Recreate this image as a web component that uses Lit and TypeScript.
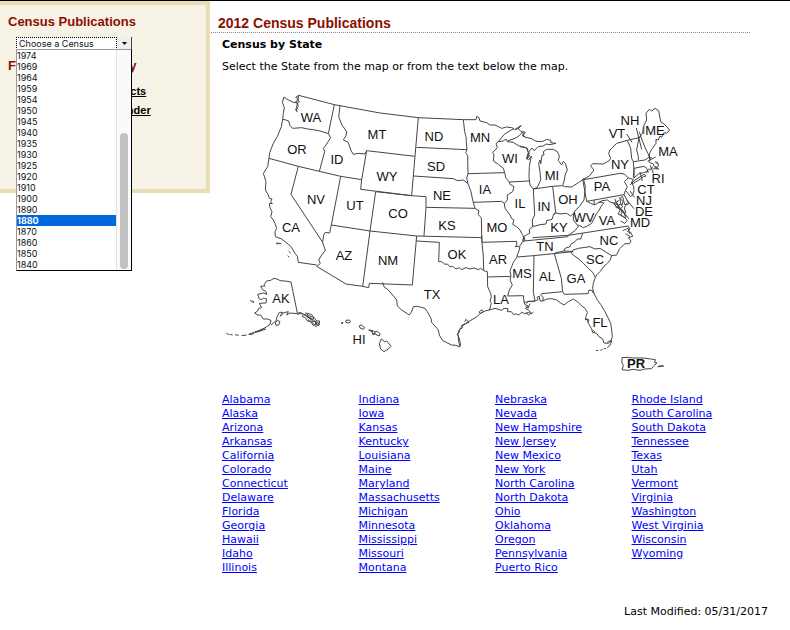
import { LitElement, html, svg, css } from "lit";
import { customElement } from "lit/decorators.js";

const YEARS = [1974, 1969, 1964, 1959, 1954, 1950, 1945, 1940, 1935, 1930, 1925, 1920, 1910, 1900, 1890, 1880, 1870, 1860, 1850, 1840];

const STATES = [
  ["Alabama", "Alaska", "Arizona", "Arkansas", "California", "Colorado", "Connecticut", "Delaware", "Florida", "Georgia", "Hawaii", "Idaho", "Illinois"],
  ["Indiana", "Iowa", "Kansas", "Kentucky", "Louisiana", "Maine", "Maryland", "Massachusetts", "Michigan", "Minnesota", "Mississippi", "Missouri", "Montana"],
  ["Nebraska", "Nevada", "New Hampshire", "New Jersey", "New Mexico", "New York", "North Carolina", "North Dakota", "Ohio", "Oklahoma", "Oregon", "Pennsylvania", "Puerto Rico"],
  ["Rhode Island", "South Carolina", "South Dakota", "Tennessee", "Texas", "Utah", "Vermont", "Virginia", "Washington", "West Virginia", "Wisconsin", "Wyoming"],
];

// Abbreviation with the centre and baseline of its label.
const LABELS: [string, number, number][] = [
  ["WA", 311, 122], ["OR", 297, 154], ["ID", 337, 164], ["MT", 377, 139], ["ND", 434, 141], ["SD", 436, 171],
  ["WY", 387, 181], ["NE", 442, 200], ["NV", 316, 204], ["UT", 355, 210], ["CO", 398, 218], ["KS", 447, 230],
  ["CA", 291, 232], ["AZ", 344, 260], ["NM", 388, 265], ["OK", 457, 259], ["TX", 432, 299], ["MN", 480, 142],
  ["WI", 510, 163], ["IA", 485, 194], ["IL", 520, 208], ["MO", 497, 232], ["AR", 498, 264], ["LA", 501, 304],
  ["MS", 522, 278], ["AL", 547, 281], ["GA", 576, 283], ["TN", 545, 251], ["KY", 559, 232], ["IN", 544, 211],
  ["OH", 568, 204], ["MI", 552, 180], ["WV", 584, 222], ["VA", 607, 225], ["PA", 602, 191], ["NY", 620, 169],
  ["NC", 609, 245], ["SC", 595, 264], ["FL", 600, 327], ["VT", 617, 138], ["NH", 630, 125], ["ME", 655, 135],
  ["MA", 668, 156], ["RI", 658, 183], ["CT", 646, 194], ["NJ", 644, 205], ["DE", 644, 216], ["MD", 640, 227],
  ["AK", 281, 303], ["HI", 359, 344],
];

// Outlines by part of the country, each drawn at three times its size.
const OUTLINES = [
  { name: "northwest", x: 220, y: 85, d: `
    M192 36L200 42 210 47 222 53 230 52 233 40 227 37 236 31 343 59 480 84 595 98
    M236 31L234 45 238 50 230 56 235 64 229 70 231 80 226 72M227 48L234 58 228 66 235 73
    M192 36L187 52 193 68 190 85 188 103 198 105 206 108 210 122 218 130 245 128 262 132 280 134 300 138 325 146 343 59
    M188 103L184 125 172 155 160 175 149 203 147 220 235 244 298 259 362 274 425 284
    M325 146L332 158 318 180 310 190 314 200 298 259
    M360 63L356 95 366 120 380 140 378 152 370 165 385 172 392 195 400 208 415 205 435 207 440 197
    M440 197L585 214M440 197L425 284 422 313 575 332
    M235 244L213 328 308 472M362 274L334 420 329 444 316 442 311 450 308 472
    M334 420L450 438 590 453M467 320L450 438 428 605
    M147 220L143 245 130 265 138 290 136 315 144 328 148 340 156 342 152 350 157 356 148 355 150 368 156 380 152 395 158 402 165 415 170 430 165 440 166 455 185 462 205 478 212 484 225 505 232 514 235 532 290 540
    M168 474L184 476M170 477L180 475M206 499L212 504M203 512L208 517` },
  { name: "north-central", x: 370, y: 85, d: `
    M145 98L280 104 318 104 320 94 327 98 330 108 350 113 360 120 375 120 395 130 410 126 425 128 432 131 420 137 403 148 385 170
    M434 134L444 127 454 122 446 130Z
    M145 98L135 214 125 332 168 335 168 367 315 370M168 367L162 453
    M139 187L291 194M130 273L250 281 262 287 280 285 294 296M17 320L125 332
    M280 104L284 140 288 155 289 170 291 194 287 203 293 212 294 266 290 280 294 296 303 320 308 345 315 370 327 378 324 388 334 398 335 450 336 472
    M294 266L404 263M310 352L395 349 403 355M418 291L478 288
    M385 170L378 176 382 188 368 202 372 210 370 228 385 238 400 250 404 263 408 280 418 291 420 298 432 305 428 320 412 330 412 345 403 355 405 370 420 390 425 401 432 405 428 418 440 425 450 435 455 445 462 458
    M385 170L400 168 408 162 412 170 430 172 445 182 465 187 472 190 474 200 478 205 470 222 475 218 479 210
    M412 168L435 160 448 152 458 140 466 142 460 150 466 158` },
  { name: "northeast", x: 520, y: 90, d: `
    M-6 116L2 123 10 128 8 138 18 142 35 146 48 154 66 155 80 148 93 151 92 158 108 160 90 164 78 162 70 168 55 170 42 182 36 174 28 183 22 200
    M0 170L20 174 25 188 20 205 26 210 34 198 28 230 27 260 30 285 40 297 52 292 62 270 60 245 56 220 60 210 62 222 66 196 72 195 70 185 80 178 100 178 112 185 118 198 115 212 125 225 130 214 136 220 142 240 136 252 133 270 128 287
    M40 297L98 289 128 287 133 290 155 291 175 278 190 268 208 258 222 240 212 228 218 221 250 222 268 212 272 205 266 190 270 180 290 160 322 151 357 143
    M190 265L196 290 192 330 178 350 165 362 160 378
    M188 268L200 334 312 314M192 269L300 250 313 252 325 264 340 268
    M325 264L313 275 322 290 316 302 312 314M322 151L332 175 335 205 340 215 342 240 340 262
    M357 143L350 180 355 200 355 210M340 215L375 210 387 202 396 204M342 235L372 229 380 235 385 248
    M358 125L366 150 375 172 386 195 390 210
    M371 132L372 105 380 90 378 70 388 58 395 63 405 55 416 62 422 95 432 102 440 110 449 120 440 130 432 128 425 142 420 138 415 150 408 148 408 160 395 178 388 192 390 210M370 110L368 130 357 143
    M390 210L386 215 392 219 400 222 403 230 412 232 416 225 412 217 406 216 414 222M403 230L416 237 400 236 396 232 390 240 385 237 378 248
    M342 235L342 264 355 252 370 248 385 244M331 284L345 270 372 253 378 258 370 260 360 268 340 280 334 281Z
    M340 268L334 279 341 288 342 302 338 315 331 320 322 308 317 302
    M312 314L320 328 326 342 314 344 308 320M308 318L300 326 302 340 308 350 303 355 314 368 316 384 302 375 306 366 298 350 290 338 296 330M284 326L292 344 300 362 294 372 310 380 322 391 314 400 302 393M289 334L281 341 296 356
    M321 340L313 354 318 370M298 322L309 335 306 345 296 343
    M222 330L223 345 212 340 200 334M223 345L232 340 246 332 262 330 272 337 284 340 290 355
    M105 368L120 372 140 370 152 378 165 366M98 289L107 368 100 376 96 388 80 392 78 402 60 404 40 410
    M40 297L44 375 37 390 38 410 28 418 29 430 20 434 12 440M37 410L40 406
    M105 368L100 376M145 436L165 422 175 409 160 390 160 378M175 405L190 413 202 408 215 400 223 384 230 370 238 360 243 350 252 338M250 338L236 336
    M145 436L325 408M12 440L8 452 12 455M38 443L145 436` },
  { name: "callouts", x: 520, y: 90, d: `
    M320 132L336 157M349 114L365 178M356 145L363 138M383 214L407 201M391 226L400 250M360 246L367 273M330 303L343 322M319 328L342 356M286 338L327 387M293 350L321 380` },
  { name: "alaska-hawaii", x: 220, y: 225, d: `
    M213 171L195 168 180 167 174 163 162 160 152 166 140 168 133 178 135 183 122 184 128 194 138 200 140 208 130 204 113 208 118 222 126 224 130 219 140 222 138 234 118 235 125 248 116 250 113 258 104 264 112 270 122 270 130 282 142 282 153 286 150 298 140 305 120 318 104 320
    M213 171L232 264M153 300L168 287 172 274 178 262 188 262 180 274 192 263 205 260 200 270 210 264 232 266 240 262 248 270 258 268
    M134 309L120 315 105 322 112 321 138 312M102 322L86 328 96 328 104 323M80 330L65 332M56 331L45 329M38 330L30 328M28 329L19 325M90 226L102 233M98 228L102 231
    M166 294L172 286 180 290 176 300 168 301Z
    M232 268L245 264 260 274 268 272 284 280 290 288 299 288 297 301 286 298 280 302 272 290 262 288 256 278 246 274M256 263L264 270 262 278 272 278 278 290 288 289 286 298 292 294M260 264L275 269 282 278 276 286 266 274M284 302L290 304 298 296 288 291
    M258 270L270 282 280 284 290 296M264 284L276 292 284 300
    M364 294L369 292 366 297ZM378 286L388 285 392 290 386 294 378 292ZM418 302L424 300 434 308 430 313 420 309ZM446 315L460 317 457 321ZM456 323L465 327 459 329ZM463 320L472 319 480 326 478 333 468 329Z
    M484 342L494 350 500 348 513 364 505 372 492 380 482 372 478 356Z` },
  { name: "south-central", x: 370, y: 225, d: `
    M-142 52L-134 76 -145 90 -154 105 -149 115 -160 124 -72 177 -22 184 -4 188 -2 175 127 180 140 33
    M140 33L335 38M139 48L208 52 206 110 215 110 225 118 232 117 240 126 248 124 258 132 268 128 275 134 288 128 300 132 312 129 325 134 332 130 341 137 352 140
    M335 30L336 52 340 95 341 137M352 140L353 185 362 205 364 215 360 228 364 235 358 255M352 156L422 154M336 52L440 49 440 60 436 65 448 64
    M38 172L42 185 55 195 72 215 80 225 82 243 95 255 118 270 124 262 130 245 142 244 165 250 172 260 183 280 185 292 205 315 208 330 218 347 230 353 245 360 258 361 270 366 266 350 264 325 268 315 275 305 295 290 320 276 330 266 345 258 358 255
    M268 364L272 360 268 340 262 328 270 318M266 316L278 308 274 302 285 296 297 292 288 283 284 290M330 266L340 260 336 254 328 260Z
    M358 255L375 250 395 256 402 250 414 251 412 260 424 260 430 268 440 267 446 270 455 262 464 266 475 262 484 266 490 262
    M462 36L458 50 450 62 448 75 442 90 440 98 430 112 425 125 420 137 423 152 420 165 427 180 418 195 413 213 460 212 462 228
    M462 36L465 46 462 48 595 35M442 96L490 92 610 80
    M462 228L470 235 476 228 486 230 495 228M462 228L464 238 475 244 466 250 476 256 484 264M480 236L474 250 468 244M484 264L476 270 468 264` },
  { name: "southeast", x: 520, y: 225, d: `
    M188 25L182 42 172 42 165 50 152 58 150 65 135 70 132 78M105 84L132 78 155 79 160 75 175 70 210 65 225 72 240 70 275 92
    M323 3L330 12 322 20 332 22 338 34 325 38 333 48 328 56 315 56 298 72 290 90 275 92 270 106 262 115 252 124 240 140 232 148 226 157 220 175 218 190 222 205 232 225 242 238 255 260 264 278 272 295 275 315 277 335 273 348 265 355 252 354 248 342 236 334 230 325 218 322 214 310 205 295 202 282 196 285 198 274 202 262 195 250 185 243 175 232 160 222 145 230 132 240 122 234 110 225 95 221 82 222 68 228 70 218 62 210 65 206 128 200 133 208 204 206 207 195 217 197 220 205
    M42 92L40 200 45 228M45 228L20 230M45 228L54 224 52 216 58 214 60 228 68 228
    M103 86L124 160 126 180 128 200M155 79L155 86 165 94 178 103 190 115 205 130 218 142 226 157
    M308 17L324 10 330 27M316 26L330 34
    M196 282L206 284 204 292M218 315L224 320 218 324M262 352L274 345
    M228 377L235 376M241 376L248 373M252 372L258 370M262 368L270 361 275 348
    M306 398L322 397 340 399 370 399 392 402 406 404 404 412 411 414 400 424 395 431 374 432 360 436 340 433 322 436 306 434 310 422 306 412ZM413 425L423 422 431 423 420 425Z` },
];

@customElement("state-map")
export class StateMap extends LitElement {
  static styles = css`
    :host { display: block; }
    svg { display: block; width: 100%; height: auto; }
    .outline { fill: none; stroke: #444; stroke-width: 3; stroke-linejoin: round; }
    .label { font: 13px "Liberation Sans", Arial, sans-serif; text-anchor: middle; fill: #111; }
    .strong { font-weight: bold; }
  `;

  render() {
    return html`<svg viewBox="222 85 460 290" role="img" aria-label="Map of the United States">
      ${OUTLINES.map((o) => svg`<path class="outline" transform="translate(${o.x} ${o.y}) scale(0.33333)" d=${o.d}></path>`)}
      ${LABELS.map(([t, x, y]) => svg`<text class="label" x=${x} y=${y}>${t}</text>`)}
      <text class="label strong" x="636" y="368">PR</text>
    </svg>`;
  }
}

@customElement("census-picker")
export class CensusPicker extends LitElement {
  static styles = css`
    :host { display: block; position: relative; width: 116px; }
    * { box-sizing: border-box; }
    select { font: 9px/11px Inter, "Liberation Sans", sans-serif; color: #111; border-radius: 0; outline: none; margin: 0; }
    .field { display: flex; height: 13px; background: #fff; }
    .choice { appearance: none; flex: 1; min-width: 0; height: 13px; padding: 0 2px; border: 1px dotted #000; background: #fff; }
    .arrow { width: 15px; padding: 0; border: 0; border-right: 1px solid #444; border-bottom: 1px solid #444; background: #eee; display: grid; place-items: center; }
    .arrow svg { width: 5px; height: 3px; }
    .popup { position: absolute; top: 12px; left: 0; width: 100%; display: flex; background: #fff; border: 1px solid #000; border-top-color: #999; border-left-color: #999; }
    .years { appearance: none; flex: 1; min-width: 0; height: 220px; padding: 0; border: 0; overflow: hidden; background: #fff; }
    .years option { height: 11px; min-height: 11px; line-height: 11px; padding: 0; color: #111; }
    .years .current { background: #0068da linear-gradient(#0068da, #0068da); color: #fff; font-weight: bold; }
    .track { width: 15px; padding: 83px 3px 1px 3px; background: #fafafa; border-left: 1px solid #e5e5e5; display: flex; }
    .thumb { flex: 1; border-radius: 4px; background: #c1c1c1; }
  `;

  render() {
    return html`
      <div class="field">
        <select class="choice" aria-label="Census"><option>Choose a Census</option></select>
        <button class="arrow" aria-label="Open list"><svg viewBox="0 0 5 3"><path d="M0 0h5L2.5 3z"></path></svg></button>
      </div>
      <div class="popup">
        <select class="years" size="20" aria-label="Census year">
          ${YEARS.map((y) => html`<option class=${y === 1880 ? "current" : ""}>${y}</option>`)}
        </select>
        <div class="track"><div class="thumb"></div></div>
      </div>`;
  }
}

@customElement("app-root")
export class AppRoot extends LitElement {
  static styles = css`
    :host { display: block; border-top: 1px solid #000; background: #fff; color: #000; font: 11px/14px "DejaVu Sans", Verdana, sans-serif; }
    * { box-sizing: border-box; }
    h1, h2, h3, p, ul { margin: 0; padding: 0; }
    ul { list-style: none; }
    .page { display: grid; grid-template-columns: 210px minmax(0, 1fr); align-items: start; }
    .side { padding: 9px 8px 69px; background: #f6f3e6; border: 4px solid #e9ddb5; border-left: 0; font-family: "Liberation Sans", Arial, sans-serif; }
    .side h3 { font-size: 13px; line-height: 16px; color: #8b0f00; white-space: nowrap; }
    census-picker { margin: 7px 0 0 8px; z-index: 1; }
    .find { margin-top: 8px; }
    .quick { margin: 8px 0 0 8px; font-weight: bold; line-height: 19px; white-space: nowrap; }
    .quick a { color: #000; }
    main { padding-left: 1px; }
    h1 { margin-right: 40px; padding: 14px 0 1px 7px; border-bottom: 1px dotted #888; font: bold 14px/16px "Liberation Sans", Arial, sans-serif; color: #8b0f00; }
    .body { padding: 5px 22px 0 11px; }
    h2 { font-size: 11px; line-height: 14px; }
    .hint { margin-top: 8px; }
    state-map { width: 460px; max-width: 100%; margin-top: 11px; }
    .states { display: grid; grid-template-columns: repeat(4, minmax(0, 1fr)); margin-top: 18px; }
    .states a { color: #00f; }
    .modified { margin-top: 30px; text-align: right; }
  `;

  render() {
    return html`
      <div class="page">
        <aside class="side">
          <h3>Census Publications</h3>
          <census-picker></census-picker>
          <h3 class="find">Find Data for County</h3>
          <ul class="quick">
            <li><a href="#facts">State County QuickFacts</a></li>
            <li><a href="#finder">The American Fact Finder</a></li>
          </ul>
        </aside>
        <main>
          <h1>2012 Census Publications</h1>
          <div class="body">
            <h2>Census by State</h2>
            <p class="hint">Select the State from the map or from the text below the map.</p>
            <state-map></state-map>
            <nav class="states" aria-label="States">
              ${STATES.map((col) => html`<ul>${col.map((s) => html`<li><a href="#${s.replace(/ /g, "-")}">${s}</a></li>`)}</ul>`)}
            </nav>
            <p class="modified">Last Modified: 05/31/2017</p>
          </div>
        </main>
      </div>`;
  }
}
